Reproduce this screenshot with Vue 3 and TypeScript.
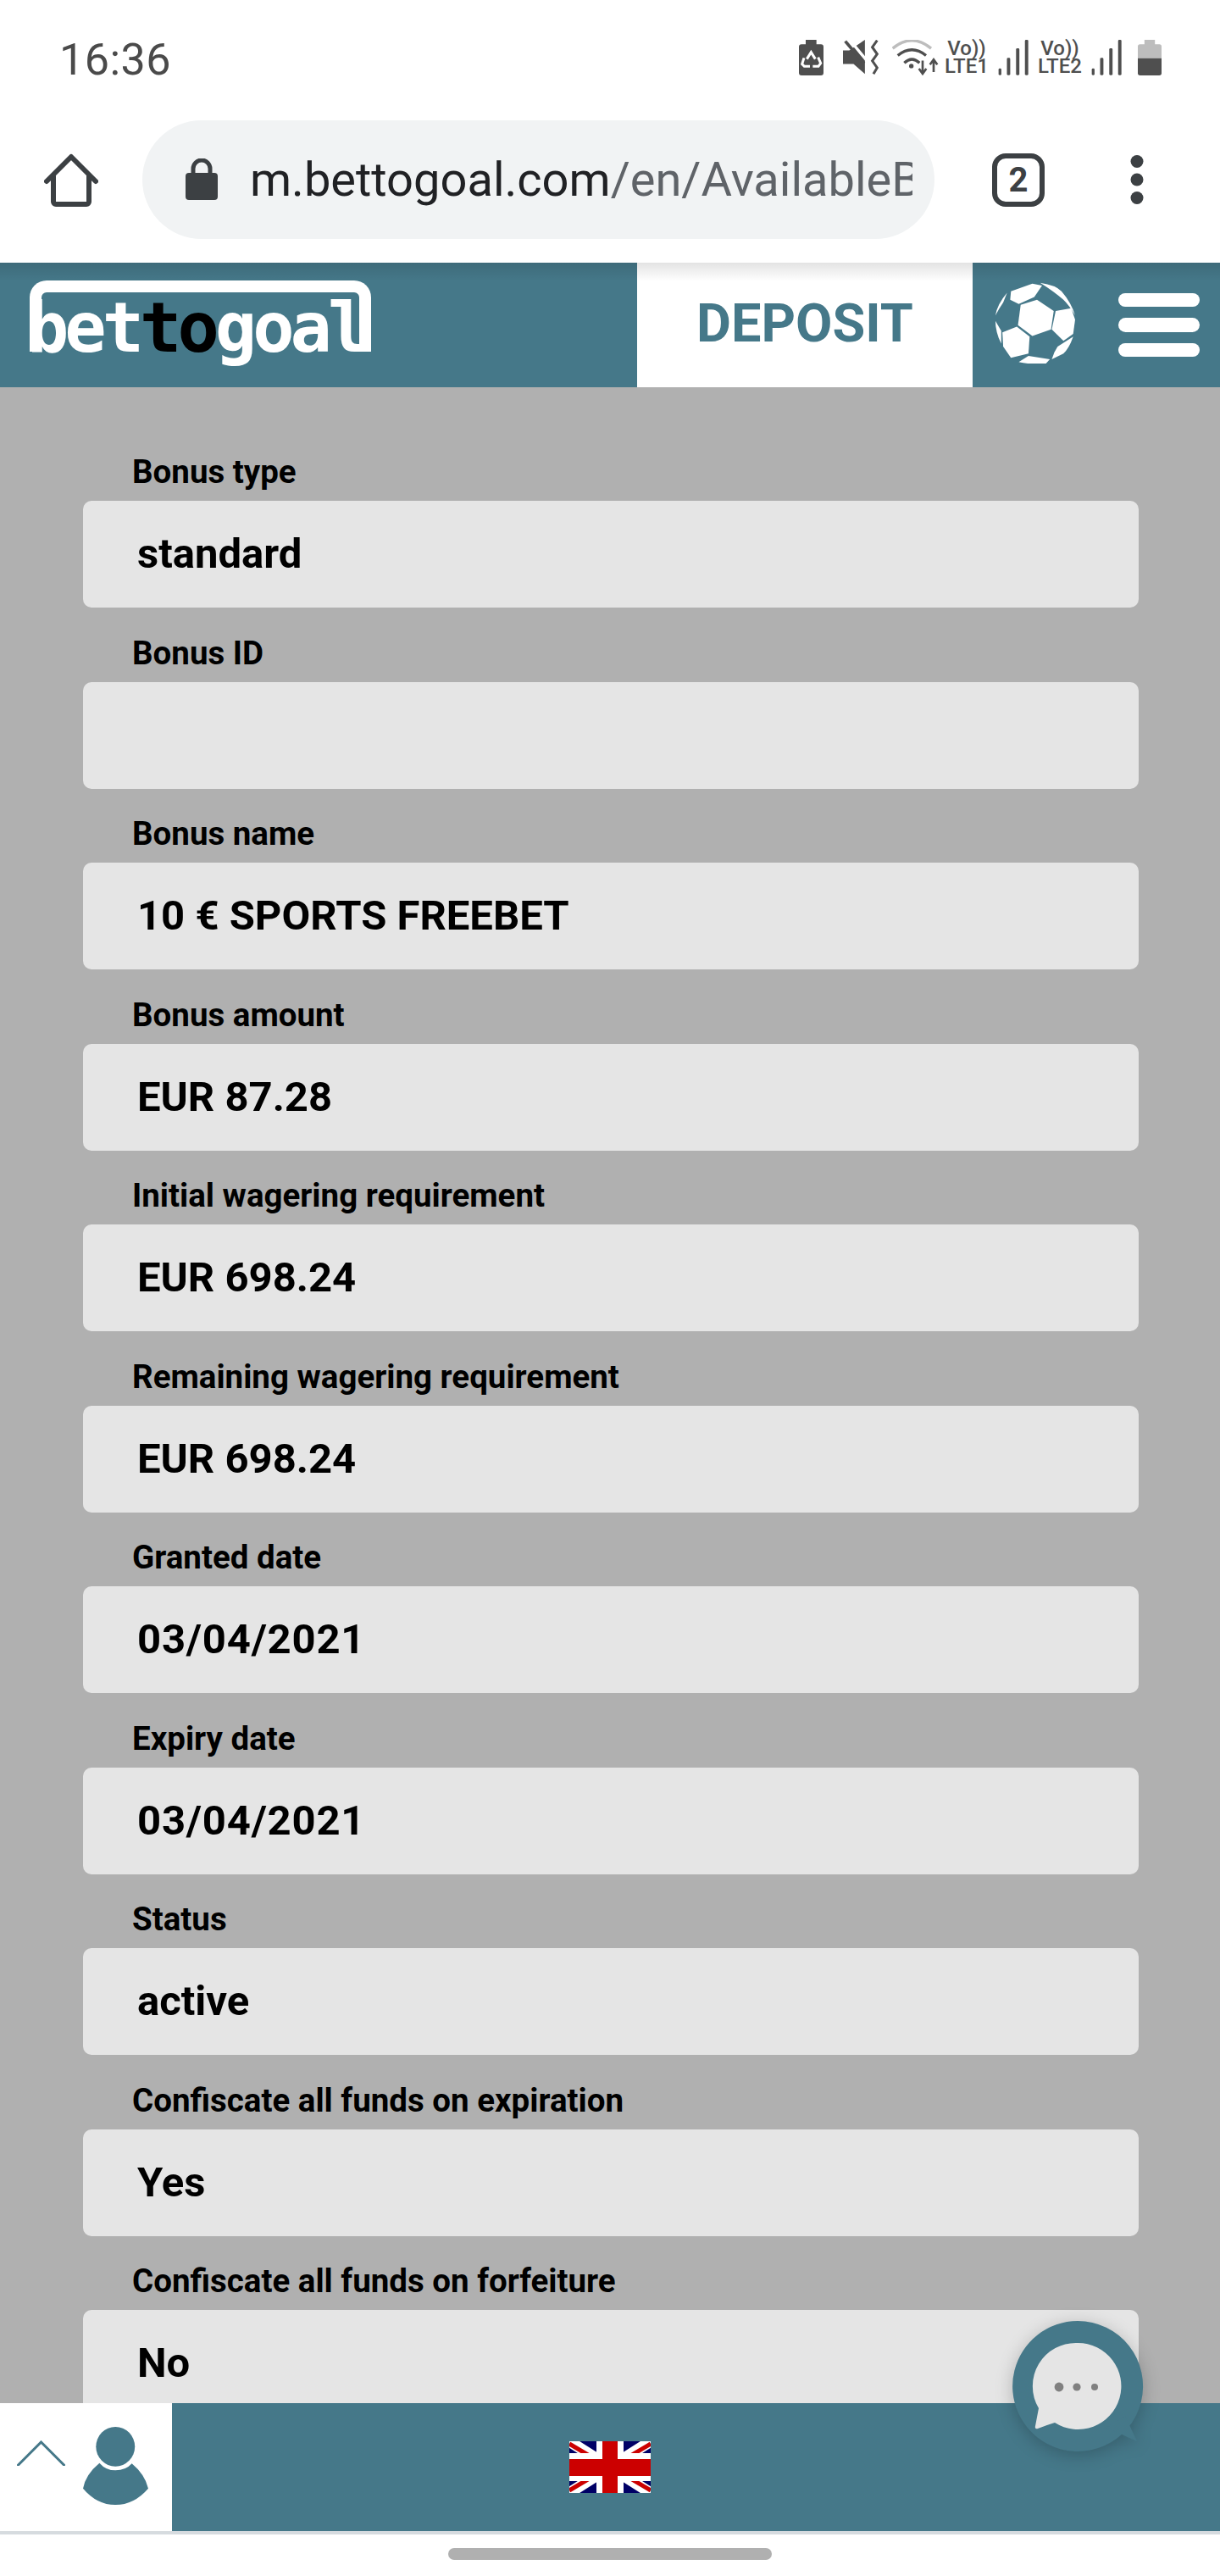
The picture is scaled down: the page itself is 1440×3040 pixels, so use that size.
<script setup lang="ts">
const fields: { label: string; value: string; date?: boolean }[] = [
  { label: "Bonus type", value: "standard" },
  { label: "Bonus ID", value: "" },
  { label: "Bonus name", value: "10 € SPORTS FREEBET" },
  { label: "Bonus amount", value: "EUR 87.28" },
  { label: "Initial wagering requirement", value: "EUR 698.24" },
  { label: "Remaining wagering requirement", value: "EUR 698.24" },
  { label: "Granted date", value: "03/04/2021", date: true },
  { label: "Expiry date", value: "03/04/2021", date: true },
  { label: "Status", value: "active" },
  { label: "Confiscate all funds on expiration", value: "Yes" },
  { label: "Confiscate all funds on forfeiture", value: "No" },
];
</script>

<template>
  <div class="phone">
    <div class="status-bar">
      <span class="time">16:36</span>
      <div class="status-icons">
        <svg class="ic-saver" viewBox="68 82 87 126" preserveAspectRatio="none">
          <path d="M92 82h38v16h16a9 9 0 0 1 9 9v92a9 9 0 0 1-9 9H77a9 9 0 0 1-9-9v-92a9 9 0 0 1 9-9h15z" fill="#4f4f4f" />
          <g fill="none" stroke="#fff" stroke-width="9">
            <path d="M96 150l15-24 15 24" />
            <path d="M136 144l9 21-8 11h-20" />
            <path d="M86 146l-7 22 8 8h20" />
          </g>
        </svg>
        <svg class="ic-mute" viewBox="225 85 125 125" preserveAspectRatio="none">
          <path d="M225 122h22l55-37v120l-40-35h-37z" fill="#4f4f4f" />
          <path d="M246 82l66 80" stroke="#fff" stroke-width="10" fill="none" />
          <path d="M233 90l66 78" stroke="#4f4f4f" stroke-width="11" fill="none" />
          <path d="M345 87l-17 24 17 24-17 24 17 24-13 22" stroke="#4f4f4f" stroke-width="9" fill="none" />
        </svg>
        <svg class="ic-wifi" viewBox="400 85 165 125" preserveAspectRatio="none">
          <path d="M402 115q68-55 136 0" stroke="#bdbdbd" stroke-width="10" fill="none" />
          <path d="M420 140q50-40 100 0M443 166q27-25 54 0" stroke="#4f4f4f" stroke-width="10" fill="none" />
          <circle cx="468" cy="177" r="8" fill="#4f4f4f" />
          <path d="M508 158v40M495 186l13 18 13-18M547 198v-40M534 172l13-18 13 18" stroke="#4f4f4f" stroke-width="8" fill="none" />
        </svg>
        <div class="lte lte-one"><span class="vo">Vo))</span><span>LTE1</span></div>
        <svg class="ic-signal" viewBox="773 90 110 118" preserveAspectRatio="none">
          <rect x="775" y="185" width="10" height="22" rx="4" fill="#4f4f4f" />
          <rect x="805" y="150" width="12" height="57" rx="4" fill="#4f4f4f" />
          <rect x="838" y="118" width="12" height="89" rx="4" fill="#4f4f4f" />
          <rect x="870" y="90" width="12" height="117" rx="4" fill="#4f4f4f" />
        </svg>
        <div class="lte lte-two"><span class="vo">Vo))</span><span>LTE2</span></div>
        <svg class="ic-signal" viewBox="773 90 110 118" preserveAspectRatio="none">
          <rect x="775" y="185" width="10" height="22" rx="4" fill="#4f4f4f" />
          <rect x="805" y="150" width="12" height="57" rx="4" fill="#4f4f4f" />
          <rect x="838" y="118" width="12" height="89" rx="4" fill="#4f4f4f" />
          <rect x="870" y="90" width="12" height="117" rx="4" fill="#4f4f4f" />
        </svg>
        <svg class="ic-battery" viewBox="1268 82 86 126" preserveAspectRatio="none">
          <path d="M1292 82h38v16h16a8 8 0 0 1 8 8v41h-86v-41a8 8 0 0 1 8-8h16z" fill="#bdbdbd" />
          <path d="M1268 147h86v53a8 8 0 0 1-8 8h-70a8 8 0 0 1-8-8z" fill="#4f4f4f" />
        </svg>
      </div>
    </div>

    <div class="toolbar">
      <svg class="ic-home" viewBox="0 0 64 63" preserveAspectRatio="none">
        <path d="M3 33L32 4l29 29M11 27v30a3 3 0 0 0 3 3h36a3 3 0 0 0 3-3V27" fill="none" stroke="#3c4043" stroke-width="6" stroke-linejoin="round" stroke-linecap="round" />
      </svg>
      <div class="url-pill">
        <svg class="ic-lock" viewBox="0 0 38 49">
          <path d="M9 19v-7a10 10 0 0 1 20 0v7" fill="none" stroke="#3c4043" stroke-width="5" />
          <rect x="0" y="17" width="38" height="32" rx="4" fill="#3c4043" />
        </svg>
        <div class="url"><span class="host">m.bettogoal.com</span>/en/AvailableBonuses</div>
      </div>
      <div class="tab-count">2</div>
      <svg class="ic-dots" viewBox="0 0 16 58">
        <circle cx="8" cy="7.5" r="7.5" fill="#3c4043" />
        <circle cx="8" cy="29" r="7.5" fill="#3c4043" />
        <circle cx="8" cy="50.5" r="7.5" fill="#3c4043" />
      </svg>
    </div>

    <header class="site-header">
      <div class="logo-cell">
        <div class="logo">
          <div class="logo-word">bet<span class="logo-dark">to</span>goal</div>
        </div>
      </div>
      <div class="deposit">DEPOSIT</div>
      <div class="header-right">
        <svg class="ic-ball" viewBox="988 998 207 287" preserveAspectRatio="none">
          <g fill="#fff">
            <path d="M1097 1060l43 40-7 65-48 23-37-38 7-72z" />
            <path d="M1030 1030l55-27 25 7-20 40-40 25-22-15z" />
            <path d="M1105 1000q40 8 55 30q25 40 35 85q-15-35-30-55q-25-30-60-60z" />
            <path d="M1145 1100l40-10 10 40-5 50-25 25-30-40z" />
            <path d="M1020 1035q-25 40-30 80q10-25 20-45z" />
            <path d="M1045 1155l33 35-3 60-45 15-20-40-2-50z" />
            <path d="M1050 1280l25-22 55 12-10 15q-35 5-70-5z" />
            <path d="M1190 1190q-10 40-25 60l-30 20q5-25 15-45z" />
            <path d="M990 1135l15 35v45q-15-40-15-80z" />
          </g>
        </svg>
        <div class="burger"><i></i><i></i><i></i></div>
      </div>
    </header>

    <main class="details">
      <div v-for="field in fields" :key="field.label" class="field">
        <label class="field-label">{{ field.label }}</label>
        <div class="field-value" :class="{ 'is-date': field.date }">{{ field.value }}</div>
      </div>
    </main>

    <nav class="bottom-nav">
      <div class="nav-user">
        <svg class="ic-chevron" viewBox="0 0 57 30">
          <path d="M1.5 29L28.5 2l27 27" fill="none" stroke="#457889" stroke-width="3" stroke-linecap="round" />
        </svg>
        <svg class="ic-person" viewBox="192 552 151 276" preserveAspectRatio="none">
          <ellipse cx="267" cy="622" rx="45" ry="70" fill="#457889" />
          <path d="M230 680q15 26 37 26q24 0 38-24q30 38 38 88q-33 58-76 58q-43 0-75-58q6-50 38-90z" fill="#457889" />
        </svg>
      </div>
      <div class="nav-lang">
        <svg class="ic-flag" viewBox="0 0 96 61" preserveAspectRatio="none">
          <rect width="96" height="61" fill="#000066" />
          <path d="M0 0l96 61M96 0L0 61" stroke="#fff" stroke-width="13" />
          <path d="M0 3l32 19M96 3L64 22M0 58l32-19M96 58L64 39" stroke="#cc0000" stroke-width="5" />
          <rect x="32" width="32" height="61" fill="#fff" />
          <rect y="14" width="96" height="33" fill="#fff" />
          <rect x="39" width="18" height="61" fill="#cc0000" />
          <rect y="21" width="96" height="20" fill="#cc0000" />
        </svg>
      </div>
    </nav>
    <div class="nav-divider"></div>
    <div class="gesture-area"><div class="gesture-handle"></div></div>

    <div class="chat-button">
      <svg viewBox="0 0 180 180" width="180" height="180">
        <path d="M90 13a77 77 0 1 1-36 145a77 77 0 0 1 36-145z" fill="#457889" />
        <path d="M146 125l14 30l-36-16z" fill="#457889" />
        <path d="M90 39a51 51 0 1 1-27 94q-10 3-20 7q-4 1-3-3l4-21a51 51 0 0 1 46-77z" fill="#e5e5e5" />
        <circle cx="68" cy="91" r="5.4" fill="#808080" />
        <circle cx="89" cy="91" r="4.6" fill="#808080" />
        <circle cx="110" cy="91" r="4" fill="#808080" />
      </svg>
    </div>
  </div>
</template>

<style scoped>
.phone {
  position: relative;
  width: 1440px;
  height: 3040px;
  display: flex;
  flex-direction: column;
  overflow: hidden;
  background: #fff;
  font-family: Roboto, "Liberation Sans", sans-serif;
}

.status-bar {
  height: 142px;
  flex: none;
  display: flex;
  align-items: center;
  justify-content: space-between;
  padding: 0 69px 2px 70px;
  box-sizing: border-box;
}

.time {
  font-size: 52px;
  letter-spacing: 0.5px;
  color: #4a4a4a;
}

.status-icons {
  display: flex;
  align-items: center;
  height: 42px;
  margin-top: -4px;
}

.status-icons svg {
  height: 42px;
  flex: none;
}

.ic-saver {
  width: 29px;
  margin-right: 23px;
}

.ic-mute {
  width: 42px;
  margin-right: 16px;
}

.ic-wifi {
  width: 55px;
  margin-right: 8px;
}

.ic-signal {
  width: 36px;
}

.ic-battery {
  width: 28px;
  margin-left: 19px;
}

.lte {
  display: flex;
  flex-direction: column;
  align-items: center;
  flex: none;
  font-size: 24px;
  line-height: 21px;
  font-weight: 500;
  color: #4f4f4f;
}

.lte-one {
  width: 50px;
  margin-right: 12px;
}

.lte-two {
  width: 54px;
  margin: 0 10px;
}

.toolbar {
  height: 168px;
  flex: none;
  box-sizing: border-box;
  padding: 0 0 28px 52px;
  display: flex;
  align-items: center;
}

.ic-home {
  width: 64px;
  height: 63px;
  flex: none;
}

.url-pill {
  width: 935px;
  height: 140px;
  margin-left: 52px;
  flex: none;
  box-sizing: border-box;
  padding: 0 26px 0 51px;
  display: flex;
  align-items: center;
  gap: 38px;
  border-radius: 70px;
  background: #f1f3f4;
}

.ic-lock {
  width: 38px;
  height: 49px;
  flex: none;
  margin-top: -2px;
}

.url {
  flex: 1;
  min-width: 0;
  overflow: hidden;
  white-space: nowrap;
  font-size: 56px;
  color: #5f6368;
}

.host {
  color: #202124;
}

.tab-count {
  width: 62px;
  height: 63px;
  margin-left: 68px;
  flex: none;
  box-sizing: border-box;
  border: 6px solid #3c4043;
  border-radius: 16px;
  display: flex;
  align-items: center;
  justify-content: center;
  font-size: 40px;
  font-weight: 700;
  color: #3c4043;
}

.ic-dots {
  width: 16px;
  height: 58px;
  margin-left: 101px;
  flex: none;
}

.site-header {
  position: relative;
  height: 147px;
  flex: none;
  display: flex;
  background: #457889;
}

.site-header::after {
  content: "";
  position: absolute;
  left: 0;
  right: 0;
  top: 0;
  height: 22px;
  background: linear-gradient(rgba(0, 0, 0, 0.11), rgba(0, 0, 0, 0));
  pointer-events: none;
}

.logo-cell {
  width: 752px;
  flex: none;
  box-sizing: border-box;
  padding: 21px 0 0 35px;
}

.logo {
  position: relative;
  width: 403px;
  height: 102px;
}

.logo::before {
  content: "";
  position: absolute;
  left: 0;
  top: 0;
  width: 403px;
  height: 84px;
  box-sizing: border-box;
  border: 14px solid #fff;
  border-bottom: 0;
  border-radius: 20px 20px 0 0;
}

.logo-word {
  position: absolute;
  left: -3px;
  top: 8px;
  font-family: "DejaVu Sans Mono", monospace;
  font-size: 82px;
  line-height: 96px;
  font-weight: 700;
  letter-spacing: -5px;
  color: #fff;
  white-space: nowrap;
}

.logo-dark {
  color: #000;
}

.deposit {
  width: 396px;
  flex: none;
  display: flex;
  align-items: center;
  justify-content: center;
  padding-bottom: 4px;
  box-sizing: border-box;
  background: #fff;
  color: #457889;
  font-size: 63px;
  font-weight: 700;
}

.header-right {
  flex: 1;
  display: flex;
  align-items: center;
  padding-left: 26px;
  gap: 51px;
}

.ic-ball {
  width: 95px;
  height: 96px;
  margin-top: -6px;
  flex: none;
}

.burger {
  width: 96px;
  display: flex;
  flex-direction: column;
  gap: 13px;
}

.burger i {
  display: block;
  height: 16.5px;
  border-radius: 9px;
  background: #fff;
}

.details {
  flex: 1;
  min-height: 0;
  overflow: hidden;
  box-sizing: border-box;
  padding: 78px 96px 0 98px;
  display: flex;
  flex-direction: column;
  gap: 31.5px;
  background: #b0b0b0;
}

.field {
  flex: none;
}

.field-label {
  display: block;
  padding-left: 58px;
  margin-bottom: 12px;
  font-size: 38.5px;
  line-height: 44px;
  font-weight: 700;
  color: #000;
}

.field-value {
  height: 126px;
  box-sizing: border-box;
  padding-left: 64px;
  border-radius: 10px;
  background: #e5e5e5;
  font-size: 49px;
  line-height: 126px;
  font-weight: 700;
  color: #000;
}

.field-value.is-date {
  letter-spacing: 0.8px;
}

.bottom-nav {
  height: 151px;
  flex: none;
  display: flex;
}

.nav-user {
  width: 203px;
  flex: none;
  box-sizing: border-box;
  padding: 28px 0 0 20px;
  display: flex;
  align-items: flex-start;
  background: #fff;
}

.ic-chevron {
  width: 57px;
  height: 30px;
  margin-top: 16px;
  flex: none;
}

.ic-person {
  width: 77px;
  height: 92px;
  margin-left: 21px;
  flex: none;
}

.nav-lang {
  flex: 1;
  display: flex;
  align-items: center;
  justify-content: center;
  padding-right: 203px;
  background: #457889;
}

.ic-flag {
  width: 96px;
  height: 61px;
}

.nav-divider {
  height: 4px;
  flex: none;
  background: #d6dbdf;
}

.gesture-area {
  height: 49px;
  flex: none;
  padding-top: 16px;
  box-sizing: border-box;
}

.gesture-handle {
  width: 382px;
  height: 14px;
  margin: 0 auto;
  border-radius: 7px;
  background: #b0b0b0;
}

.chat-button {
  position: absolute;
  left: 1182px;
  top: 2726px;
  width: 180px;
  height: 180px;
  filter: drop-shadow(0 4px 10px rgba(0, 0, 0, 0.22));
}
</style>

<style>
html,
body {
  margin: 0;
  background: #fff;
}
</style>
